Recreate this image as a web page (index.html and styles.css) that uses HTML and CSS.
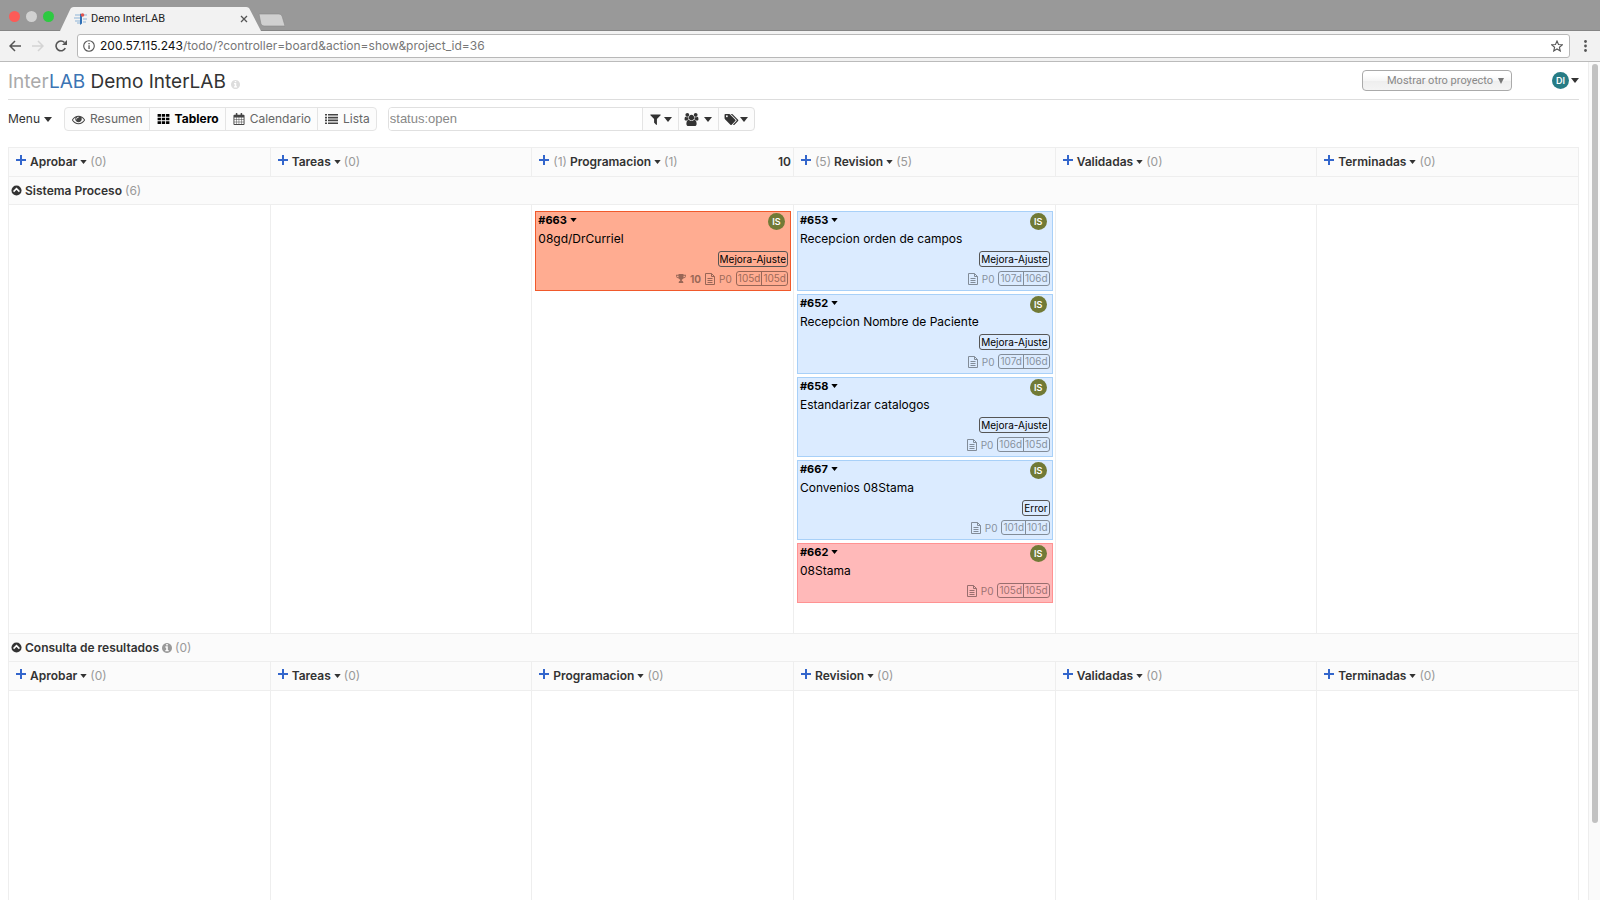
FILE: index.html
```html
<!DOCTYPE html>
<html lang="es">
<head>
<meta charset="utf-8">
<title>Demo InterLAB</title>
<link rel="stylesheet" href="styles.css">
</head>
<body>
<svg class="sprite" aria-hidden="true">
  <symbol id="caret" viewBox="0 0 8 5"><path d="M0 0h8L4 5z"/></symbol>
  <symbol id="plus" viewBox="0 0 10 10"><path d="M4 0h2v4h4v2H6v4H4V6H0V4h4z"/></symbol>
  <symbol id="info" viewBox="128 128 1536 1536"><path d="M1152 1376v-160q0-14-9-23t-23-9h-96v-512q0-14-9-23t-23-9h-320q-14 0-23 9t-9 23v160q0 14 9 23t23 9h96v320h-96q-14 0-23 9t-9 23v160q0 14 9 23t23 9h448q14 0 23-9t9-23zm-128-896v-160q0-14-9-23t-23-9h-192q-14 0-23 9t-9 23v160q0 14 9 23t23 9h192q14 0 23-9t9-23zm640 416q0 209-103 385.5t-279.5 279.5-385.5 103-385.5-103-279.5-279.5-103-385.5 103-385.5 279.5-279.5 385.5-103 385.5 103 279.5 279.5 103 385.5z"/></symbol>
  <symbol id="eye" viewBox="0 0 1792 1792"><path d="M1664 960q-152-236-381-353 61 104 61 225 0 185-131.5 316.5t-316.5 131.5-316.5-131.5-131.5-316.5q0-121 61-225-229 117-381 353 133 205 333.5 326.5t434.5 121.5 434.5-121.5 333.5-326.5zm-720-384q0-20-14-34t-34-14q-125 0-214.5 89.5t-89.5 214.5q0 20 14 34t34 14 34-14 14-34q0-86 61-147t147-61q20 0 34-14t14-34zm848 384q0 34-20 69-140 230-376.5 368.5t-499.5 138.5-499.5-139-376.5-368q-20-35-20-69t20-69q140-229 376.5-368t499.5-139 499.5 139 376.5 368q20 35 20 69z"/></symbol>
  <symbol id="grid" viewBox="0 0 13 11"><path d="M0 0h3.7v3H0zM4.6 0h3.7v3H4.600zM9.300 0H13v3H9.300zM0 4h3.700v3H0zM4.600 4h3.700v3H4.600zM9.300 4H13v3H9.300zM0 8h3.700v3H0zM4.600 8h3.700v3H4.600zM9.300 8H13v3H9.300z"/></symbol>
  <symbol id="calendar" viewBox="0 0 12 13"><path fill-rule="evenodd" d="M1 2h1.500V.8q0-.8.7-.8h.4q.7 0 .7.8V2h3.400V.8q0-.8.7-.8h.4q.7 0 .7.800V2H11q1 0 1 1v9q0 1-1 1H1q-1 0-1-1V3q0-1 1-1zM1 5v1.900h2V5zM3.500 5v1.900h2.200V5zM6.200 5v1.900h2.300V5zM9 5v1.900h2V5zM1 7.400v2h2v-2zM3.500 7.400v2h2.200v-2zM6.200 7.400v2h2.300v-2zM9 7.400v2h2v-2zM1 9.900V12h2V9.900zM3.500 9.900V12h2.200V9.900zM6.200 9.900V12h2.300V9.900zM9 9.900V12h2V9.900z"/></symbol>
  <symbol id="list" viewBox="0 0 13 10"><path d="M0 0h2v1.600H0zM3 0h10v1.600H3zM0 2.800h2v1.600H0zM3 2.800h10v1.600H3zM0 5.600h2v1.600H0zM3 5.600h10v1.600H3zM0 8.400h2V10H0zM3 8.400h10V10H3z"/></symbol>
  <symbol id="filter" viewBox="180 200 1430 1480"><path d="M1595 295q17 41-14 70l-493 493v742q0 42-39 59-13 5-25 5-27 0-45-19l-256-256q-19-19-19-45v-486l-493-493q-31-29-14-70 17-39 59-39h1280q42 0 59 39z"/></symbol>
  <symbol id="users" viewBox="0 0 1920 1792"><path d="M593 896q-162 5-265 128h-134q-82 0-138-40.5t-56-118.500q0-353 124-353 6 0 43.500 21t97.500 42.500 119 21.500q67 0 133-23-5 37-5 66 0 139 81 256zm1071 637q0 120-73 189.500t-194 69.500h-874q-121 0-194-69.500t-73-189.500q0-53 3.500-103.500t14-109 26.500-108.500 43-97.500 62-81 85.500-53.500 111.500-20q10 0 43 21.500t73 48 107 48 135 21.500 135-21.500 107-48 73-48 43-21.500q61 0 111.500 20t85.500 53.500 62 81 43 97.500 26.500 108.500 14 109 3.500 103.500zm-1024-1277q0 106-75 181t-181 75-181-75-75-181 75-181 181-75 181 75 75 181zm704 384q0 159-112.500 271.500t-271.500 112.500-271.500-112.500-112.500-271.500 112.500-271.500 271.500-112.500 271.500 112.500 112.500 271.500zm576 225q0 78-56 118.500t-138 40.500h-134q-103-123-265-128 81-117 81-256 0-29-5-66 66 23 133 23 59 0 119-21.500t97.500-42.500 43.500-21q124 0 124 353zm-128-609q0 106-75 181t-181 75-181-75-75-181 75-181 181-75 181 75 75 181z"/></symbol>
  <symbol id="tags" viewBox="0 0 1920 1792"><path d="M448 448q0-53-37.500-90.500t-90.500-37.500-90.500 37.500-37.500 90.500 37.500 90.500 90.500 37.500 90.500-37.500 37.500-90.500zm1067 576q0 53-37 90l-491 492q-39 37-91 37-53 0-90-37l-715-716q-38-37-64.500-101t-26.500-117v-416q0-52 38-90t90-38h416q53 0 117 26.500t102 64.500l715 714q37 39 37 91zm384 0q0 53-37 90l-491 492q-39 37-91 37-36 0-59-14t-53-45l470-470q37-37 37-90 0-52-37-91l-715-714q-38-38-102-64.500t-117-26.500h224q53 0 117 26.500t102 64.500l715 714q37 39 37 91z"/></symbol>
  <symbol id="collapse" viewBox="0 0 12 12"><circle cx="6" cy="6" r="5.500"/><path d="M2.800 7.200 6 4l3.200 3.200" fill="none" stroke="#fff" stroke-width="1.700"/></symbol>
  <symbol id="file" viewBox="0 0 10 12"><path d="M.5.5h6l3 3v8h-9zM6.500.5v3h3M2.500 5.500h5M2.500 7.500h5M2.500 9.500h5" fill="none" stroke="currentColor"/></symbol>
  <symbol id="trophy" viewBox="0 0 12 11"><path d="M3 0h6v1h3v1.500Q12 5 8.700 5.500 8 6.500 7 7v1.300q1.800.2 1.800 1.700v1H3.200v-1Q3.200 8.500 5 8.300V7q-1-.5-1.700-1.500Q0 5 0 2.500V1h3zM1 2v.5q0 1.400 1.700 1.900Q3 3.500 3 2zM9 2q0 1.500.3 2.400Q11 4 11 2.500V2z" fill-rule="evenodd"/></symbol>
</svg>

<div class="window">
  <div class="tabstrip">
    <div class="lights"><span class="light close"></span><span class="light min"></span><span class="light max"></span></div>
    <div class="tab">
      <svg class="tab-shape" viewBox="0 0 204 24" preserveAspectRatio="none" aria-hidden="true"><path d="M0 24 10 3Q11 0 14 0H188Q191 0 192 3L203 24z" fill="#f2f2f2"/></svg>
      <svg class="favicon" viewBox="0 0 14 14" aria-hidden="true"><path d="M1 3h5M0 6h6M1 9h5M3 11h3M9 3h4M9 7h4M9 10h3" stroke="#8db4d8"/><path d="M6 1.500l2 1v9L6 13z" fill="#2f6fb5"/><circle cx="8.500" cy="3" r="1.800" fill="#e0554f"/></svg>
      <span class="tab-title">Demo InterLAB</span>
      <svg class="tab-close" viewBox="0 0 8 8" aria-hidden="true"><path d="M1 1l6 6M7 1L1 7" stroke="#555" stroke-width="1.300"/></svg>
    </div>
    <svg class="new-tab" viewBox="0 0 27 14" aria-hidden="true"><path d="M1 1h20q2 0 3 2l3 10H6q-2 0-3-2z" fill="#d0d0d0" stroke="#888" stroke-width=".6"/></svg>
  </div>
  <div class="toolbar">
    <button class="tool" aria-label="Atrás"><svg viewBox="0 0 12 12"><path d="M12 6H1M6 1 1 6l5 5" fill="none" stroke="#555" stroke-width="1.500"/></svg></button>
    <button class="tool" aria-label="Adelante"><svg viewBox="0 0 12 12"><path d="M0 6h11M6 1l5 5-5 5" fill="none" stroke="#d4d4d4" stroke-width="1.500"/></svg></button>
    <button class="tool" aria-label="Recargar"><svg viewBox="0 0 12 12"><path d="M10.300 8.200A4.900 4.900 0 1 1 9.500 2.500" fill="none" stroke="#555" stroke-width="1.600"/><path d="M12 0v5H7z" fill="#555"/></svg></button>
    <div class="address">
      <svg class="site-info" viewBox="0 0 12 12" aria-hidden="true"><circle cx="6" cy="6" r="5.300" fill="none" stroke="#555" stroke-width="1.100"/><path d="M5.400 5.200h1.300V9H5.400zM5.400 3h1.300v1.300H5.400z" fill="#555"/></svg>
      <span class="url"><span class="host">200.57.115.243</span>/todo/?controller=board&amp;action=show&amp;project_id=36</span>
      <svg class="star" viewBox="0 0 12 12" aria-hidden="true"><path d="M6 1l1.500 3.500 3.800.3-2.900 2.500.9 3.700L6 9l-3.300 2 .9-3.700L.7 4.800l3.800-.3z" fill="none" stroke="#555" stroke-width="1.100"/></svg>
    </div>
    <button class="tool dots" aria-label="Opciones"><svg viewBox="0 0 3 12"><circle cx="1.500" cy="1.500" r="1.400" fill="#555"/><circle cx="1.500" cy="6" r="1.400" fill="#555"/><circle cx="1.500" cy="10.500" r="1.400" fill="#555"/></svg></button>
  </div>

  <div class="viewport">
    <main class="page">
      <header class="page-head">
        <h1 class="title"><a class="logo" href="#">Inter<span class="lab">LAB</span></a> Demo InterLAB</h1>
        <svg class="title-info"><use href="#info"/></svg>
        <div class="project-select">
          <select aria-label="Mostrar otro proyecto"><option>Mostrar otro proyecto</option></select>
          <svg class="select-arrow" viewBox="0 0 6 6" aria-hidden="true"><path d="M0 0h6L3 6z"/></svg>
        </div>
        <button class="user"><span class="avatar teal">DI</span><svg class="caret"><use href="#caret"/></svg></button>
      </header>

      <div class="filters">
        <button class="menu">Menu <svg class="caret"><use href="#caret"/></svg></button>
        <nav class="views">
          <a class="view" href="#"><svg class="i-eye"><use href="#eye"/></svg>Resumen</a>
          <a class="view active" href="#"><svg class="i-grid"><use href="#grid"/></svg>Tablero</a>
          <a class="view" href="#"><svg class="i-cal"><use href="#calendar"/></svg>Calendario</a>
          <a class="view" href="#"><svg class="i-list"><use href="#list"/></svg>Lista</a>
        </nav>
        <div class="search">
          <input type="text" value="status:open" aria-label="Filtro">
          <button class="drop" aria-label="Filtros"><svg class="i-filter"><use href="#filter"/></svg><svg class="caret"><use href="#caret"/></svg></button>
          <button class="drop people" aria-label="Usuarios"><svg class="i-users"><use href="#users"/></svg><svg class="caret"><use href="#caret"/></svg></button>
          <button class="drop labels" aria-label="Categorías"><svg class="i-tags"><use href="#tags"/></svg><svg class="caret"><use href="#caret"/></svg></button>
        </div>
      </div>

      <table class="board">
        <tr class="columns">
          <th><div class="col"><svg class="plus"><use href="#plus"/></svg>Aprobar<svg class="caret"><use href="#caret"/></svg><span class="count">(0)</span></div></th>
          <th><div class="col"><svg class="plus"><use href="#plus"/></svg>Tareas<svg class="caret"><use href="#caret"/></svg><span class="count">(0)</span></div></th>
          <th><div class="col"><svg class="plus"><use href="#plus"/></svg><span class="count">(1)</span>Programacion<svg class="caret"><use href="#caret"/></svg><span class="count">(1)</span><span class="score">10</span></div></th>
          <th><div class="col"><svg class="plus"><use href="#plus"/></svg><span class="count">(5)</span>Revision<svg class="caret"><use href="#caret"/></svg><span class="count">(5)</span></div></th>
          <th><div class="col"><svg class="plus"><use href="#plus"/></svg>Validadas<svg class="caret"><use href="#caret"/></svg><span class="count">(0)</span></div></th>
          <th><div class="col"><svg class="plus"><use href="#plus"/></svg>Terminadas<svg class="caret"><use href="#caret"/></svg><span class="count">(0)</span></div></th>
        </tr>
        <tr class="lane"><th colspan="6"><div class="lane-name"><svg class="collapse"><use href="#collapse"/></svg>Sistema Proceso<span class="count">(6)</span></div></th></tr>
        <tr class="tasks">
          <td></td>
          <td></td>
          <td>
            <div class="cards">
              <article class="card orange">
                <div class="card-head"><a href="#">#663</a><svg class="caret"><use href="#caret"/></svg><span class="avatar olive">IS</span></div>
                <a class="card-title" href="#">08gd/DrCurriel</a>
                <div class="tags"><span class="tag">Mejora-Ajuste</span></div>
                <div class="meta"><svg class="i-trophy"><use href="#trophy"/></svg><b>10</b><svg class="i-file"><use href="#file"/></svg><span>P0</span><span class="age"><span>105d</span><span>105d</span></span></div>
              </article>
            </div>
          </td>
          <td>
            <div class="cards">
              <article class="card blue">
                <div class="card-head"><a href="#">#653</a><svg class="caret"><use href="#caret"/></svg><span class="avatar olive">IS</span></div>
                <a class="card-title" href="#">Recepcion orden de campos</a>
                <div class="tags"><span class="tag">Mejora-Ajuste</span></div>
                <div class="meta"><svg class="i-file"><use href="#file"/></svg><span>P0</span><span class="age"><span>107d</span><span>106d</span></span></div>
              </article>
              <article class="card blue">
                <div class="card-head"><a href="#">#652</a><svg class="caret"><use href="#caret"/></svg><span class="avatar olive">IS</span></div>
                <a class="card-title" href="#">Recepcion Nombre de Paciente</a>
                <div class="tags"><span class="tag">Mejora-Ajuste</span></div>
                <div class="meta"><svg class="i-file"><use href="#file"/></svg><span>P0</span><span class="age"><span>107d</span><span>106d</span></span></div>
              </article>
              <article class="card blue">
                <div class="card-head"><a href="#">#658</a><svg class="caret"><use href="#caret"/></svg><span class="avatar olive">IS</span></div>
                <a class="card-title" href="#">Estandarizar catalogos</a>
                <div class="tags"><span class="tag">Mejora-Ajuste</span></div>
                <div class="meta"><svg class="i-file"><use href="#file"/></svg><span>P0</span><span class="age"><span>106d</span><span>105d</span></span></div>
              </article>
              <article class="card blue">
                <div class="card-head"><a href="#">#667</a><svg class="caret"><use href="#caret"/></svg><span class="avatar olive">IS</span></div>
                <a class="card-title" href="#">Convenios 08Stama</a>
                <div class="tags"><span class="tag">Error</span></div>
                <div class="meta"><svg class="i-file"><use href="#file"/></svg><span>P0</span><span class="age"><span>101d</span><span>101d</span></span></div>
              </article>
              <article class="card red">
                <div class="card-head"><a href="#">#662</a><svg class="caret"><use href="#caret"/></svg><span class="avatar olive">IS</span></div>
                <a class="card-title" href="#">08Stama</a>
                <div class="meta"><svg class="i-file"><use href="#file"/></svg><span>P0</span><span class="age"><span>105d</span><span>105d</span></span></div>
              </article>
            </div>
          </td>
          <td></td>
          <td></td>
        </tr>
        <tr class="lane"><th colspan="6"><div class="lane-name"><svg class="collapse"><use href="#collapse"/></svg>Consulta de resultados<svg class="lane-info"><use href="#info"/></svg><span class="count">(0)</span></div></th></tr>
        <tr class="columns">
          <th><div class="col"><svg class="plus"><use href="#plus"/></svg>Aprobar<svg class="caret"><use href="#caret"/></svg><span class="count">(0)</span></div></th>
          <th><div class="col"><svg class="plus"><use href="#plus"/></svg>Tareas<svg class="caret"><use href="#caret"/></svg><span class="count">(0)</span></div></th>
          <th><div class="col"><svg class="plus"><use href="#plus"/></svg>Programacion<svg class="caret"><use href="#caret"/></svg><span class="count">(0)</span></div></th>
          <th><div class="col"><svg class="plus"><use href="#plus"/></svg>Revision<svg class="caret"><use href="#caret"/></svg><span class="count">(0)</span></div></th>
          <th><div class="col"><svg class="plus"><use href="#plus"/></svg>Validadas<svg class="caret"><use href="#caret"/></svg><span class="count">(0)</span></div></th>
          <th><div class="col"><svg class="plus"><use href="#plus"/></svg>Terminadas<svg class="caret"><use href="#caret"/></svg><span class="count">(0)</span></div></th>
        </tr>
        <tr class="tasks"><td></td><td></td><td></td><td></td><td></td><td></td></tr>
      </table>
    </main>
    <div class="scrollbar"><div class="thumb"></div></div>
  </div>
</div>
</body>
</html>
```
FILE: styles.css
```css
* { box-sizing: border-box; }
body { margin: 0; font: 12px/16px Inter, Roboto, sans-serif; color: #333; background: #fff; }
a { color: inherit; text-decoration: none; }
button { font: inherit; color: inherit; background: none; border: 0; padding: 0; }
svg { display: block; flex: none; fill: currentColor; }
.sprite { position: absolute; width: 0; height: 0; }
.window { display: flex; flex-direction: column; height: 100vh; overflow: hidden; }

/* Browser frame */
.tabstrip { display: flex; align-items: flex-end; height: 31px; background: #999; border-bottom: 1px solid #858585; }
.lights { display: flex; gap: 5px; padding: 0 5px 8px 9px; }
.light { width: 11px; height: 11px; margin-right: 1px; border-radius: 50%; }
.close { background: #fc5b57; }
.min { background: #d1d1d1; }
.max { background: #2dca41; }
.tab { position: relative; display: flex; align-items: center; width: 202px; height: 24px; margin-bottom: -1px; padding: 0 14px; font: 11px/16px Roboto, sans-serif; color: #222; }
.tab-shape { position: absolute; inset: 0; width: 100%; height: 100%; }
.favicon { position: relative; width: 14px; height: 14px; margin-right: 3px; }
.tab-title { position: relative; flex: 1; }
.tab-close { position: relative; width: 8px; height: 8px; }
.new-tab { width: 27px; height: 14px; margin: 0 0 3px -4px; }
.toolbar { display: flex; align-items: center; height: 31px; padding: 0 13px 0 9px; gap: 11px; background: #f2f2f2; border-bottom: 1px solid #bbb; }
.tool svg { width: 12px; height: 12px; }
.tool.dots svg { width: 3px; }
.address { display: flex; flex: 1; align-items: center; height: 24px; padding: 0 6px 0 5px; margin: 0 3px 0 -1px; background: #fff; border: 1px solid #b8b8b8; border-radius: 3px; font: 12px/18px Inter, sans-serif; color: #777; }
.site-info { width: 12px; height: 12px; margin-right: 5px; }
.url { flex: 1; }
.host { color: #111; }
.star { width: 12px; height: 12px; }

/* Page */
.viewport { display: flex; flex: 1; min-height: 0; }
.page { flex: 1; padding: 0 9px 0 8px; overflow: hidden; }
.scrollbar { width: 12px; padding: 2px 3px; background: #fafafa; border-left: 1px solid #ededed; }
.thumb { width: 6px; height: 91%; border-radius: 3px; background: #c1c1c1; }
.page-head { display: flex; align-items: center; height: 38px; border-bottom: 1px solid #ddd; }
.title { margin: 2px 0 0; font-size: 19px; line-height: 24px; font-weight: 400; }
.logo { color: #aaa; }
.lab { color: #3b74b4; }
.title-info { width: 9px; height: 9px; margin: 7px auto 0 5px; color: #ddd; }
.project-select { position: relative; width: 150px; }
.project-select select { width: 100%; height: 21px; padding: 0 0 0 24px; appearance: none; font: 11px/16px Roboto, sans-serif; color: #888; background: linear-gradient(#fff 20%, #f6f6f6 50%, #eee 52%, #f4f4f4); border: 1px solid #aaa; border-radius: 4px; }
.select-arrow { position: absolute; right: 8px; top: 8px; width: 6px; height: 6px; color: #777; pointer-events: none; }
.user { display: flex; align-items: center; gap: 2px; margin-left: 40px; }
.caret { width: 8px; height: 5px; }
.avatar { display: block; width: 17px; height: 17px; border-radius: 50%; color: #fff; font-size: 9px; line-height: 17px; font-weight: 600; text-align: center; }
.teal { background: #277c85; }
.olive { background: #717a36; }

/* Filter bar */
.filters { display: flex; align-items: center; margin: 7px 0 16px; height: 24px; }
.menu { display: flex; align-items: center; gap: 4px; margin-right: 12px; }
.views { display: flex; margin-right: 11px; border: 1px solid #e4e4e4; border-radius: 4px; background: #fcfcfc; color: #666; }
.view { display: flex; align-items: center; height: 22px; padding: 0 6px 0 7px; white-space: nowrap; }
.view + .view { border-left: 1px solid #e4e4e4; }
.view svg { color: #444; margin-right: 5px; }
.view.active, .view.active svg { color: #000; font-weight: 700; }
.i-eye { width: 13px; height: 13px; }
.i-grid { width: 13px; height: 10px; }
.i-cal { width: 12px; height: 12px; }
.i-list { width: 13px; height: 10px; }
.search { display: flex; height: 24px; border: 1px solid #e0e0e0; border-radius: 4px; background: #fcfcfc; overflow: hidden; }
.search input { width: 253px; border: 0; padding: 0 1px; font: 13px/18px "Liberation Sans", sans-serif; color: #888; background: #fff; }
.drop { display: flex; align-items: center; gap: 3px; padding: 0 6px 0 7px; border-left: 1px solid #e4e4e4; }
.people { gap: 5px; padding: 0 6px 0 5px; }
.labels { gap: 1px; padding: 0 6px 0 5px; }
.i-filter { width: 11px; height: 11px; }
.i-users { width: 15px; height: 13px; }
.i-tags { width: 15px; height: 13px; }

/* Board */
.board { width: 100%; table-layout: fixed; border-collapse: collapse; }
.board th, .board td { padding: 0; border: 1px solid #eee; vertical-align: top; text-align: left; font-weight: 600; }
.board th { background: #fbfbfb; }
.col { display: flex; align-items: center; height: 28px; padding: 0 2px 0 7px; gap: 3px; }
.plus { width: 10px; height: 10px; margin: 0 1px 4px 0; color: #36c; }
.col .caret, .card .caret { width: 7px; height: 4px; }
.count { color: #999; font-weight: 400; }
.score { margin-left: auto; }
.lane-name { display: flex; align-items: center; height: 27px; padding: 0 2px; gap: 3px; }
.collapse { width: 11px; height: 11px; }
.lane-info { width: 10px; height: 10px; color: #999; }
.tasks td { height: 429px; font-weight: 400; }
.cards { display: flex; flex-direction: column; gap: 3px; padding: 6px 2px 0 3px; color: #000; }
.card { padding: 0 2px 2px; border: 1px solid; }
.orange { background: #ffac91; border-color: #f0592b; }
.blue { background: #dbebff; border-color: #a8d0f8; }
.red { background: #ffb9b9; border-color: #ff9292; }
.card-head { display: flex; align-items: center; height: 16px; gap: 3px; font-size: 11px; font-weight: 700; }
.card-head .avatar { margin: 3px 3px 0 auto; }
.card-title { display: block; height: 21px; line-height: 21px; }
.tags { display: flex; justify-content: flex-end; height: 20px; align-items: center; }
.tag { padding: 0 1px; border: 1px solid #555; border-radius: 3px; font-size: 10px; line-height: 14px; }
.meta { display: flex; align-items: center; justify-content: flex-end; height: 19px; gap: 4px; font-size: 10px; opacity: .4; }
.i-file { width: 10px; height: 12px; }
.i-trophy { width: 10px; height: 9px; }
.age { display: flex; border: 1px solid; border-radius: 3px; line-height: 13px; }
.age span { padding: 0 1px; }
.age span + span { border-left: 1px solid; }
```
